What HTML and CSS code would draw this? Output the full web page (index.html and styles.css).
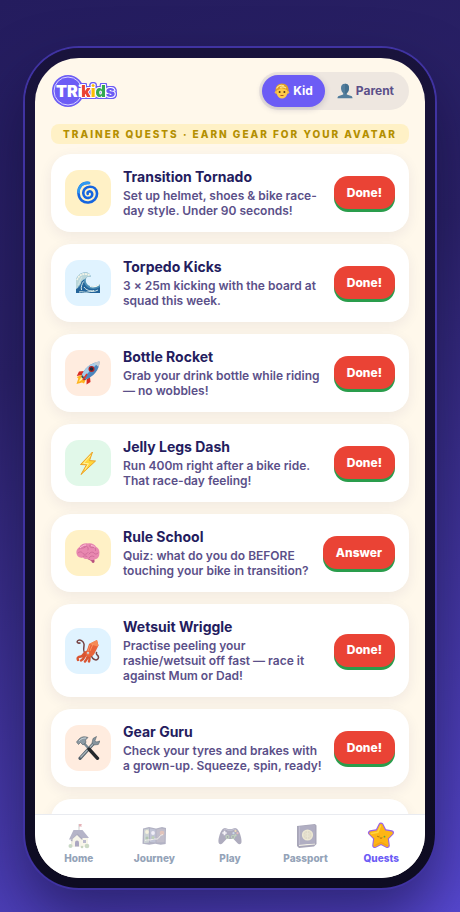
FILE: index.html
```html
<!DOCTYPE html>
<html lang="en">
<head>
  <meta charset="UTF-8">
  <meta name="viewport" content="width=device-width, initial-scale=1.0">
  <title>TRikids</title>
  <link rel="stylesheet" href="styles.css">
</head>
<body>
<div class="phone">
  <div class="screen">

    <header class="topbar">
      <svg class="logo" viewBox="0 0 66 34" role="img" aria-label="TRikids">
        <circle cx="17" cy="17" r="16" fill="#6c5cf5"/>
        <circle cx="17" cy="17" r="14" fill="none" stroke="#d9d4ff" stroke-width="1"/>
        <text class="logo-kids" x="30" y="23"><tspan fill="#ea4335">k</tspan><tspan fill="#fbbc05">i</tspan><tspan fill="#34a853">d</tspan><tspan fill="#6c5cf5">s</tspan></text>
        <text class="logo-tri" x="5" y="23">TRi</text>
      </svg>
      <div class="mode">
        <button type="button" class="mode-btn active">
          <svg viewBox="0 0 16 16" width="16" height="16">
            <path d="M1.500 8C1 3.500 4 .5 8 .5s7 3 6.500 7.500l-.8 3.200H2.300z" fill="#dfa028"/>
            <circle cx="2.200" cy="9.300" r="1.400" fill="#f2b84c"/><circle cx="13.800" cy="9.300" r="1.400" fill="#f2b84c"/>
            <path d="M2.800 7.500C4.500 6.800 6 5.500 7 5c2 .7 4.500 1 6.200 2.500v3c-.5 3.200-2.700 5-5.200 5s-4.700-1.800-5.200-5z" fill="#ffcb48"/>
            <path d="M2.500 5.500C4 2.500 7 1.700 10 2.700M6 4.500c2-1 4-.8 6 .5" fill="none" stroke="#ffe590" stroke-width="1.100"/>
            <circle cx="5.600" cy="9" r="1" fill="#5b3a1a"/><circle cx="10.400" cy="9" r="1" fill="#5b3a1a"/>
            <path d="M5.800 12q2.200 2.200 4.400 0z" fill="#a8482a"/>
          </svg>
          Kid
        </button>
        <button type="button" class="mode-btn">
          <svg viewBox="0 0 16 16" width="16" height="16">
            <path d="M8 .8c2.800 0 4.200 1.900 4 4.500-.1 2.100-1 4-2.200 4.900v1.300l4.400 1.400c1 .4 1.300 1.200 1.300 2.400H.5c0-1.200.3-2 1.300-2.400l4.400-1.400v-1.300C5 9.300 4.100 7.400 4 5.300 3.800 2.700 5.200.8 8 .8z" fill="#527d9c"/>
            <path d="M8 .8c2.800 0 4.200 1.900 4 4.500-.1 2.100-1 4-2.200 4.900L8 11z" fill="#44708f"/>
          </svg>
          Parent
        </button>
      </div>
    </header>

    <main class="content">
      <h1 class="banner">TRAINER QUESTS · EARN GEAR FOR YOUR AVATAR</h1>
      <ul class="quests">
        <li class="quest">
          <span class="tile yellow">
            <svg viewBox="0 0 24 24" width="24" height="24">
              <path d="M13 2C6 1 2 6 2.500 12.500 3 18.500 7.500 22 12.500 21.500c5.500-.5 8.800-4.500 8.500-9.300C20.700 8 17.500 5.500 13.800 5.700 9.500 6 7 9 7.300 12.500c.3 3 2.600 4.700 5.200 4.400 2.500-.3 4-2 3.700-4.200-.3-1.700-1.600-2.600-3-2.300-1.300.3-1.900 1.200-1.500 2.400" fill="none" stroke="#1565e0" stroke-width="2.600" stroke-linecap="round"/>
              <path d="M13 2C7 1.300 2.800 5 2.500 11" fill="none" stroke="#2f9af0" stroke-width="2.600" stroke-linecap="round"/>
            </svg>
          </span>
          <div class="info">
            <h2>Transition Tornado</h2>
            <p>Set up helmet, shoes &amp; bike race-day style. Under 90 seconds!</p>
          </div>
          <button type="button" class="btn">Done!</button>
        </li>
        <li class="quest">
          <span class="tile blue">
            <svg viewBox="0 0 24 24" width="24" height="24">
              <path d="M0 22V9C1 5 4 2 8.500 1.500c4-.3 6.300 1.700 6 4.500-1.800-1-3.300-.7-4.200 1C8.800 10 10.500 14 14 15c3.200 1 6.500.4 10-2v9z" fill="#4d8fb5"/>
              <path d="M0 22V9C1 5 4 2 8.500 1.500c4-.3 6.300 1.700 6 4.500-1.800-1-3.300-.7-4.200 1l-3 2C5 11 4.500 14 2 16z" fill="#b9d6da"/>
              <path d="M0 18c3-1 5-3 5.500-7.500L8 8.500c-.3 4 1.700 7.500 6 9 3.500 1 7 .5 10-1.500v6H0z" fill="#23649a"/>
              <path d="M1 9c1.500-4.500 4.800-6.300 8.500-6 2.200.1 3.800.8 4.300 2" fill="none" stroke="#f1f4e9" stroke-width="1.800" stroke-dasharray="2 .7"/>
              <path d="M2 14c1.500-2 1.500-5 4-8M5.500 19c-.8-3 .5-6 2-8.500M8 16c2 3 6 4.500 10 3.500M3 21c3-1 6 1 9 0s7 0 10-2" fill="none" stroke="#d7e9e8" stroke-width="1"/>
              <path d="M14 15.500c3 1 6 .5 9.500-2" fill="none" stroke="#f4f8f2" stroke-width="1.300"/>
            </svg>
          </span>
          <div class="info">
            <h2>Torpedo Kicks</h2>
            <p>3 × 25m kicking with the board at squad this week.</p>
          </div>
          <button type="button" class="btn">Done!</button>
        </li>
        <li class="quest">
          <span class="tile orange">
            <svg viewBox="0 0 24 24" width="24" height="24">
              <path d="M5.500 14 .8 16l1.500 1.500L.5 23l5.500-1.500 2 1 2-4.500z" fill="#ffb41f"/>
              <path d="M5.500 15.500 2.500 21l5-3z" fill="#fff09a"/>
              <path d="M8 10 3 10.500.8 15l5-1zM14 16l.5 5-4 2.500.2-5.500z" fill="#d92b20"/>
              <path d="M6 14C8 8 14 2 23.500.5 23.500 9 17.500 15.500 10 18.500z" fill="#4c86bd"/>
              <path d="M6 14C8 8 14 2 23.500.5L8 16z" fill="#a6cde9"/>
              <path d="M18 1.800C20 1 22 .6 23.500.5c0 2-.4 3.800-1 5.500z" fill="#c3cbd3"/>
              <circle cx="15.500" cy="8" r="3" fill="#b32121"/><circle cx="15.500" cy="8" r="1.800" fill="#20283a"/>
              <path d="M6 14l4 4.500-1.500.8L5.300 16z" fill="#404b5c"/>
              <path d="M11 13 7 19" stroke="#e3342b" stroke-width="1.600"/>
            </svg>
          </span>
          <div class="info">
            <h2>Bottle Rocket</h2>
            <p>Grab your drink bottle while riding — no wobbles!</p>
          </div>
          <button type="button" class="btn">Done!</button>
        </li>
        <li class="quest">
          <span class="tile green">
            <svg viewBox="0 0 24 24" width="24" height="24">
              <path d="M16.500 1 4.500 13.500l6 .3L5 23.500 19.500 10l-6-.4z" fill="#ffd83a" stroke="#eda126" stroke-width="1" stroke-linejoin="round"/>
              <path d="M14.500 4.500 7.500 12.300l5 .4-3.500 6" fill="none" stroke="#fff3a0" stroke-width="1"/>
            </svg>
          </span>
          <div class="info">
            <h2>Jelly Legs Dash</h2>
            <p>Run 400m right after a bike ride. That race-day feeling!</p>
          </div>
          <button type="button" class="btn">Done!</button>
        </li>
        <li class="quest">
          <span class="tile yellow">
            <svg viewBox="0 0 24 24" width="24" height="24">
              <path d="M11 17.500c2 2 4.500 1.500 5 4 1.500 1.200 3-.3 2.500-2l-.5-3z" fill="#b8507e"/>
              <path d="M1 14C-.5 11 .8 7.500 3.500 6 5 3 9 1.800 12 2.600c3-.8 6.500.5 8 3.200 2.500 1.200 4 4.200 3.300 7 .2 3-2 5.500-5 5.600-2.200 1.400-4.500.6-6-.6-2 .7-4.300.2-5.300-1.300C4.500 17 2 16.200 1 14z" fill="#e888b0"/>
              <path d="M3 8c2-2 4 0 6-2s4 1 3 3M2 12c2-2 4-1 5 .5s4 1 5-1M14 4c-1 2 1 3 3 2.500s3 1 2.500 3M13 13c1-2 4-2.500 5-1s2.500 1.500 4 0M6.500 16c1-1.500 3-1.500 4.500-.5M13 17c1-2 3-2.500 5-1.500M7 4c0 1 1 2 2 2" fill="none" stroke="#cc6795" stroke-width=".8" stroke-linecap="round"/>
              <path d="M4 7c2-2 4-3 6-3M15 4.500c2 0 3 1 4 2" fill="none" stroke="#ffc0d8" stroke-width=".9"/>
            </svg>
          </span>
          <div class="info">
            <h2>Rule School</h2>
            <p>Quiz: what do you do BEFORE touching your bike in transition?</p>
          </div>
          <button type="button" class="btn">Answer</button>
        </li>
        <li class="quest">
          <span class="tile blue">
            <svg viewBox="0 0 24 24" width="24" height="24">
              <path d="M11 15C5.500 14 8.500 8 8 5S4 0 2 1.500s0 3 2 2.500M15 16c2 6 7 6 7.500 2.500.3-2.500-3-2.500-2-5" fill="none" stroke="#754344" stroke-width="1.500" stroke-linecap="round"/>
              <path d="M11 13c-4 0-3 4-6 4.500s-4 1-3 3.500M12 14c-4 1-2 5-7 7.500M13 15c-2 2-1 5-4 7.500M14 16c-1 3 0 4-1 6.500" fill="none" stroke="#d95431" stroke-width="2.400" stroke-linecap="round"/>
              <path d="M11 11 13 5l8-4 1.500 5.500-4 8c-1.500 3-4.500 4-7 3s-2.500-4-.5-6.500z" fill="#e8633a"/>
              <path d="M13 5 21 1l1.500 5.500-1 1z" fill="#f58a55"/>
              <path d="M14 6l-2 6M17 5l-3 7" stroke="#ff9d69" stroke-width=".8"/>
              <circle cx="12" cy="14" r="1.200" fill="#fff"/><circle cx="12" cy="14" r=".6" fill="#222"/>
            </svg>
          </span>
          <div class="info">
            <h2>Wetsuit Wriggle</h2>
            <p>Practise peeling your rashie/wetsuit off fast — race it against Mum or Dad!</p>
          </div>
          <button type="button" class="btn">Done!</button>
        </li>
        <li class="quest">
          <span class="tile orange">
            <svg viewBox="0 0 24 24" width="24" height="24">
              <path d="M18 7 4 22.300" stroke="#53606a" stroke-width="3.200" stroke-linecap="round"/>
              <path d="M18 7 4.500 21.500" stroke="#aab6bd" stroke-width="1.300"/>
              <path d="M20.500.5 17 2.500l-1 4.500 1.800 2 4.500-.5L24 5l-3.500 1-1.500-1.500z" fill="#86949d" stroke="#56636c" stroke-width=".6"/>
              <path d="M7 6 13.500 13.500" stroke="#798891" stroke-width="2.500"/>
              <path d="m13 13 8.500 9.300" stroke="#25292d" stroke-width="3.400" stroke-linecap="round"/>
              <path d="M.5 6 3.500 2.500C6 .5 9 .3 12 1.500L9.500 4 10 6.500 7 9 4.500 6.500 2.500 8.500z" fill="#8c9aa3" stroke="#505d66" stroke-width=".6"/>
              <path d="M3 5c2-2.500 4-3 7-3" fill="none" stroke="#cbd5da" stroke-width="1"/>
            </svg>
          </span>
          <div class="info">
            <h2>Gear Guru</h2>
            <p>Check your tyres and brakes with a grown-up. Squeeze, spin, ready!</p>
          </div>
          <button type="button" class="btn">Done!</button>
        </li>
        <li class="quest"></li>
      </ul>
    </main>

    <nav class="tabs">
      <a href="#" class="tab">
        <svg viewBox="0 0 28 28" width="28" height="28">
          <path d="M14 8V2" stroke="#777" stroke-width=".8"/><path d="M14 2h3l-.8 1.200.8 1.300h-3z" fill="#c4555f"/>
          <path d="M6 15h17v9.500H6z" fill="#d8d4bd"/><path d="M15 15h8v9.500h-8z" fill="#f0ebd0"/>
          <path d="M8.500 8h9l6.500 8H16l-3-3-4.500 4.500H4z" fill="#5c5a86"/>
          <path d="M12.500 11.500l5.500 5.500-1.500 1-4-3.500-5 5-2-1z" fill="#45436e"/>
          <path d="M7.500 17 12 13l4.500 4.500v7h-9z" fill="#ece7ce"/>
          <path d="M10 24.500v-4a2 2 0 0 1 4 0v4z" fill="#453c76"/><path d="M18 18h3v3h-3z" fill="#6a6896"/>
          <circle cx="5.500" cy="24" r="2" fill="#86a97f"/><circle cx="22" cy="24" r="2.300" fill="#8dab7e"/><circle cx="17" cy="25" r="1.300" fill="#88a575"/>
        </svg>
        Home
      </a>
      <a href="#" class="tab">
        <svg viewBox="0 0 28 28" width="28" height="28">
          <path d="M3 6.500 9 5l7 1.500L22 5l4 1-.3 16-5 .8-5.500-1-6 1-6.700-1z" fill="#56567c"/>
          <path d="m4 7.500 5-1v14l-5 .8z" fill="#8d9ba0"/><path d="m10 6.500 5.500 1v13l-5.500-.5z" fill="#777ca4"/><path d="M16.500 7.500 21 6.500l4 .8-.5 13-8 .2z" fill="#766f8c"/>
          <circle cx="7" cy="10" r="1.900" fill="#e9dfb6"/><circle cx="13" cy="11" r="1.900" fill="#ddd9ee"/><circle cx="22" cy="11" r="2.300" fill="#bc7b66"/>
          <path d="M5 18.500c3-2 4 .5 7-1s5 1 7-2 2-2 4-3" fill="none" stroke="#f3efdd" stroke-width=".9"/>
          <circle cx="7" cy="16" r="1.500" fill="#537e50"/><circle cx="13" cy="15.500" r="1.500" fill="#6f955e"/>
        </svg>
        Journey
      </a>
      <a href="#" class="tab">
        <svg viewBox="0 0 28 28" width="28" height="28">
          <path d="M8 6.200c2-.8 3 .8 4 .8h4c1 0 2-1.600 4-.8 3.500 1.300 6 10.500 5.500 14-.4 2.300-2.500 2.500-4 1L17.500 17h-7l-4 4.200c-1.500 1.500-3.600 1.300-4-1C2 16.700 4.500 7.500 8 6.200z" fill="#4c486f"/>
          <path d="M8 7.200c2-.6 3 .9 4 .9h4c1 0 2-1.500 4-.9" fill="none" stroke="#8c88aa" stroke-width="1"/>
          <path d="M8.500 8.800v4.400M6.300 11h4.400" stroke="#e8e4ed" stroke-width="1.700"/>
          <circle cx="19.500" cy="9" r="1.100" fill="#e1bd61"/><circle cx="17.500" cy="11.200" r="1.100" fill="#8fa8ce"/><circle cx="21.500" cy="11.200" r="1.100" fill="#ca6a6a"/><circle cx="19.500" cy="13.400" r="1.100" fill="#75a46d"/>
          <circle cx="11.500" cy="15" r="2" fill="#77a56e"/><circle cx="17" cy="15" r="2" fill="#77a56e"/><circle cx="11.500" cy="15" r=".9" fill="#363356"/><circle cx="17" cy="15" r=".9" fill="#363356"/>
        </svg>
        Play
      </a>
      <a href="#" class="tab">
        <svg viewBox="0 0 28 28" width="28" height="28">
          <path d="M5 4 23 2l1.500 1.500V22L22 24.500 7 26l-2-2z" fill="#3e3a62"/>
          <path d="m7 24 16-1.500v-1L7 22.500z" fill="#e4dfcb"/>
          <path d="M6.500 4.500 23 2.700v18.500L6.500 22.800z" fill="#514d78"/>
          <path d="M7.500 4.500v18" stroke="#716c98" stroke-width="1"/>
          <circle cx="15.500" cy="13" r="5.600" fill="#d7cc9e"/><circle cx="15.500" cy="13" r="4.100" fill="#b5a982"/>
          <path d="M11.500 13h8M15.500 9v8M12.500 10.800q3 1.700 6 0M12.500 15.200q3-1.700 6 0" fill="none" stroke="#d3c9a2" stroke-width=".8"/>
        </svg>
        Passport
      </a>
      <a href="#" class="tab current">
        <svg viewBox="0 0 28 28" width="28" height="28">
          <path d="m14 3 3.300 6.500 7.200 1.200-5.200 5.200 1 7.600L14 20.200l-6.300 3.300 1-7.600-5.200-5.200 7.200-1.200z" fill="#9a63e8" stroke="#9a63e8" stroke-width="5" stroke-linejoin="round"/>
          <path d="m14 3.500 3.100 6.500 7 1.100-5.100 5 1 7.100-6-3.300-6 3.300 1-7.100-5.100-5 7-1.100z" fill="#fdb515" stroke="#fdb515" stroke-width="3.400" stroke-linejoin="round"/>
          <path d="m13.500 4-2.700 6.300-6.300 1.200" fill="none" stroke="#ffd440" stroke-width="1.600" stroke-linecap="round"/>
          <path d="M10.500 14.500q.8.800 1.600 0M13 16q1 .8 2 0" fill="none" stroke="#9a6414" stroke-width=".9" stroke-linecap="round"/>
          <circle cx="17.500" cy="14.700" r=".9" fill="#5ca83b"/><path d="m8 23.500 6-3 6 3" fill="none" stroke="#f2a016" stroke-width="1.300" stroke-linecap="round"/>
        </svg>
        Quests
      </a>
    </nav>

  </div>
</div>
</body>
</html>
```

FILE: styles.css
```css
* {
  box-sizing: border-box;
  margin: 0;
  padding: 0;
}
body {
  font-family: Inter, sans-serif;
  min-height: 100vh;
  padding: 48px 25px 24px;
  background: linear-gradient(160deg, #241c5e 0%, #2b2269 35%, #5748d0 100%);
  color: #241c5e;
  overflow: hidden;
}
.phone {
  max-width: 430px;
  height: calc(100vh - 72px);
  min-height: 480px;
  margin: 0 auto;
  padding: 10px;
  border-radius: 54px;
  background: linear-gradient(#19133c, #0e0c22);
  box-shadow: 0 0 0 2px #4033a2, 0 30px 60px rgba(10, 6, 40, 0.5);
}
.screen {
  height: 100%;
  display: flex;
  flex-direction: column;
  overflow: hidden;
  border-radius: 44px;
  background: #fff8eb;
}

/* top bar */
.topbar {
  display: flex;
  align-items: center;
  justify-content: space-between;
  padding: 14px 16px;
}
.logo {
  width: 66px;
  height: 34px;
  overflow: visible;
}
.logo text {
  font-size: 16px;
  font-weight: 900;
}
.logo-tri {
  fill: #fff;
}
.logo-kids {
  stroke: #fff;
  stroke-width: 2px;
  stroke-linejoin: round;
  paint-order: stroke;
  filter: drop-shadow(1px 0 0 #6c5cf5) drop-shadow(-1px 0 0 #6c5cf5) drop-shadow(0 1px 0 #6c5cf5) drop-shadow(0 -1px 0 #6c5cf5);
}
.mode {
  display: flex;
  padding: 3px;
  border-radius: 19px;
  background: #eee7e0;
}
.mode-btn {
  display: flex;
  align-items: center;
  gap: 3px;
  height: 32px;
  padding: 0 12px;
  border: none;
  border-radius: 16px;
  background: none;
  color: #5b5089;
  font: 700 12px/16px Inter, sans-serif;
  cursor: pointer;
}
.mode-btn.active {
  background: #6c5cf5;
  color: #fff;
  box-shadow: 0 2px 6px rgba(36, 28, 94, 0.2);
}

/* quests */
.content {
  flex: 1;
  min-height: 0;
  overflow: hidden;
  padding: 0 16px;
}
.banner {
  margin-bottom: 10px;
  border-radius: 8px;
  background: #fff1c6;
  color: #b38f00;
  font-size: 10px;
  font-weight: 800;
  line-height: 20px;
  letter-spacing: 2px;
  text-align: center;
  white-space: nowrap;
}
.quests {
  display: flex;
  flex-direction: column;
  gap: 12px;
  list-style: none;
}
.quest {
  display: flex;
  align-items: center;
  gap: 12px;
  min-height: 78px;
  padding: 14px;
  border-radius: 20px;
  background: #fff;
  box-shadow: 0 4px 14px rgba(36, 28, 94, 0.07);
}
.tile {
  flex: none;
  display: flex;
  align-items: center;
  justify-content: center;
  width: 46px;
  height: 46px;
  border-radius: 14px;
}
.yellow { background: #fff1c6; }
.blue { background: #e0f3ff; }
.orange { background: #ffecdf; }
.green { background: #e1f8e9; }
.info {
  flex: 1;
}
.info h2 {
  margin-bottom: 2px;
  font-size: 14px;
  font-weight: 700;
  line-height: 18px;
}
.info p {
  color: #5b5089;
  font-size: 12px;
  font-weight: 600;
  line-height: 15px;
}
.btn {
  flex: none;
  height: 33px;
  margin-bottom: 1px;
  padding: 0 13px;
  border: none;
  border-radius: 14px;
  background: #ea4335;
  box-shadow: 0 3px 0 #2a9d4c;
  color: #fff;
  font: 800 12px/16px Inter, sans-serif;
  cursor: pointer;
}

/* bottom tabs */
.tabs {
  display: flex;
  padding: 7px 6px 12px;
  border-top: 1px solid #e9ebf0;
  background: #fff;
}
.tab {
  flex: 1;
  display: flex;
  flex-direction: column;
  align-items: center;
  gap: 1px;
  color: #94a3b8;
  font-size: 10px;
  font-weight: 800;
  line-height: 15px;
  text-decoration: none;
}
.tab svg {
  opacity: 0.45;
}
.tab.current {
  color: #6c5cf5;
}
.tab.current svg {
  opacity: 1;
}
```
